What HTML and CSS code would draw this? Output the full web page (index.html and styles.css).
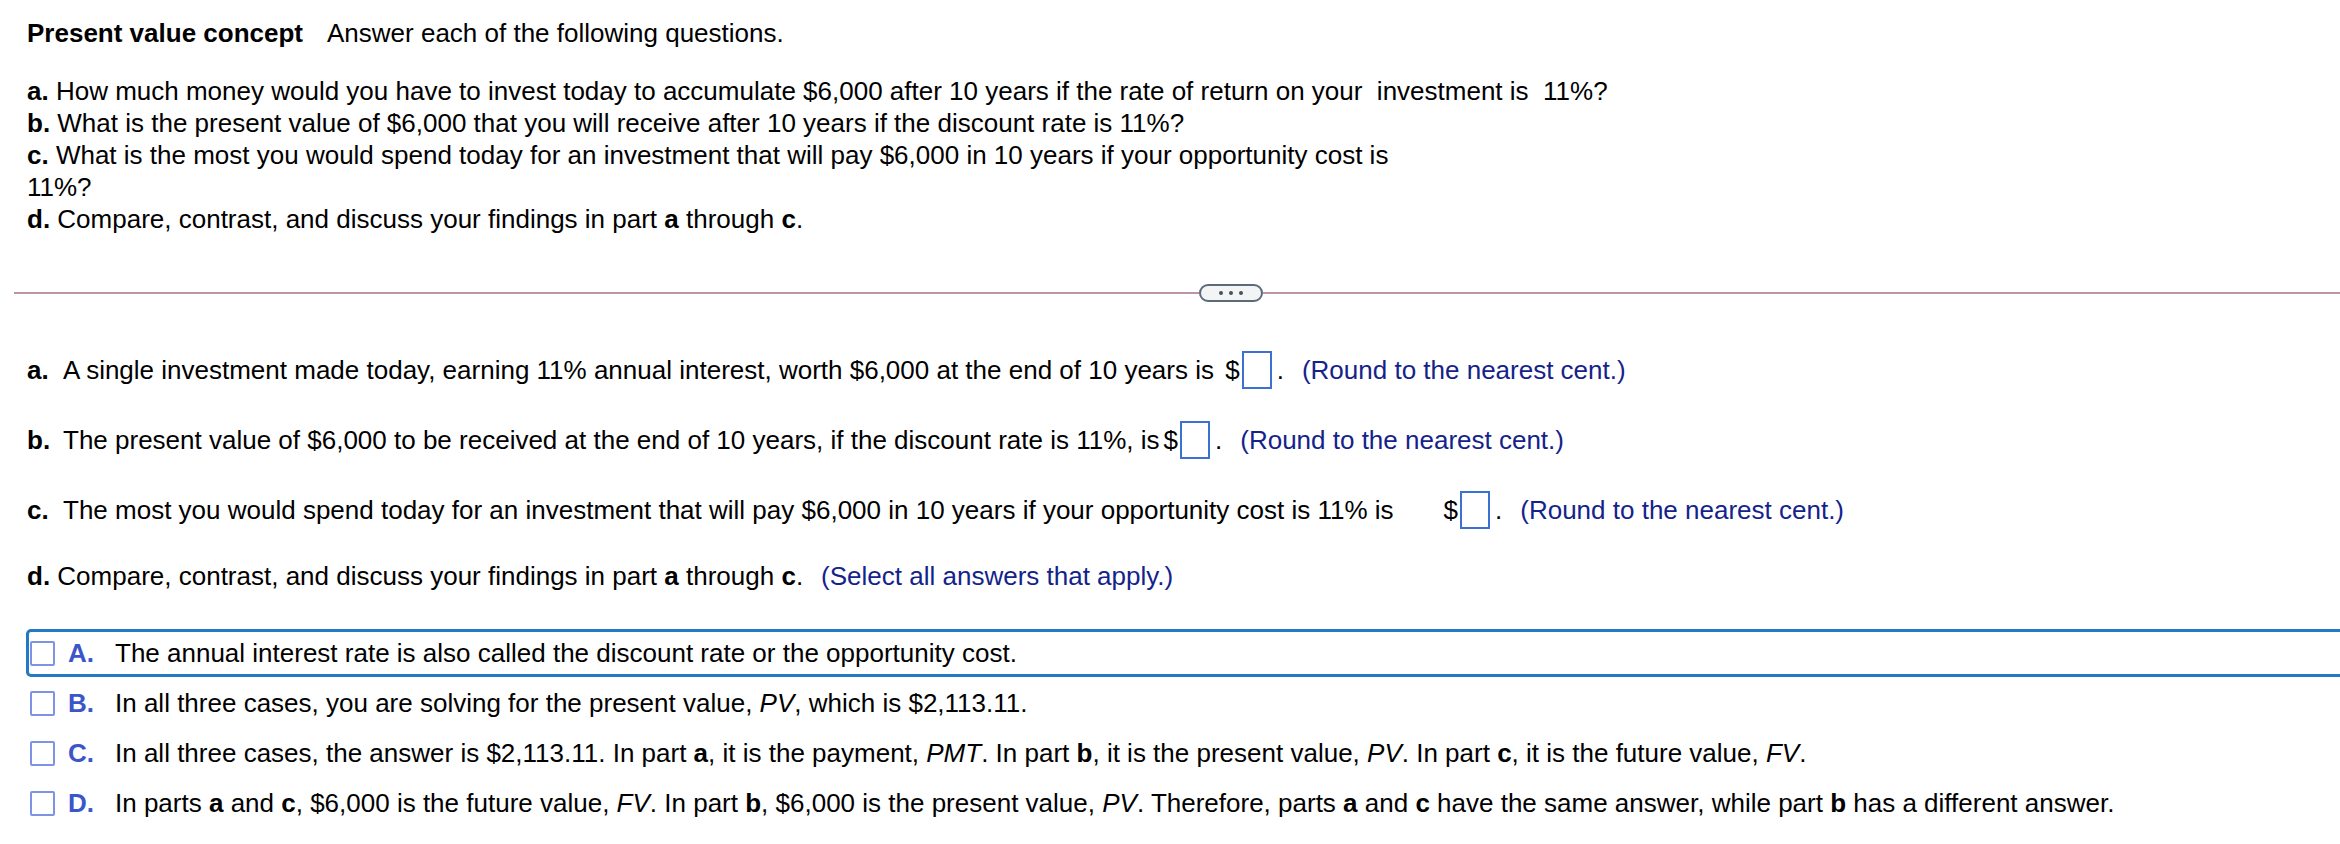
FILE: index.html
```html
<!DOCTYPE html>
<html lang="en">
<head>
    <meta charset="UTF-8">
    <title>Present value concept</title>
    <link rel="stylesheet" href="styles.css">
</head>
<body>
    <div class="page">
        <div class="intro">
            <p class="title"><b>Present value concept</b><span class="lead">Answer each of the following questions.</span></p>
            <p class="questions">
                <b>a.</b> How much money would you have to invest today to accumulate $6,000 after 10 years if the rate of return on your&nbsp; investment is&nbsp; 11%?<br>
                <b>b.</b> What is the present value of $6,000 that you will receive after 10 years if the discount rate is 11%?<br>
                <b>c.</b> What is the most you would spend today for an investment that will pay $6,000 in 10 years if your opportunity cost is<br>
                11%?<br>
                <b>d.</b> Compare, contrast, and discuss your findings in part <b>a</b> through <b>c</b>.
            </p>
        </div>

        <div class="divider">
            <span class="rule rule-left"></span>
            <button class="more"><i></i><i></i><i></i></button>
            <span class="rule"></span>
        </div>

        <div class="answers">
            <div class="ans">
                <b class="tag">a.</b>
                <span>A single investment made today, earning 11% annual interest, worth $6,000 at the end of 10 years is&nbsp;</span>
                <span class="cur">$</span><span class="box"></span><span class="dot">.</span>
                <span class="hint">(Round to the nearest cent.)</span>
            </div>
            <div class="ans">
                <b class="tag">b.</b>
                <span>The present value of $6,000 to be received at the end of 10 years, if the discount rate is 11%, is</span>
                <span class="cur">$</span><span class="box"></span><span class="dot">.</span>
                <span class="hint">(Round to the nearest cent.)</span>
            </div>
            <div class="ans">
                <b class="tag">c.</b>
                <span>The most you would spend today for an investment that will pay $6,000 in 10 years if your opportunity cost is 11% is</span>
                <span class="cur cur-wide">$</span><span class="box"></span><span class="dot">.</span>
                <span class="hint">(Round to the nearest cent.)</span>
            </div>
            <p class="ans-d">
                <b>d.</b> Compare, contrast, and discuss your findings in part <b>a</b> through <b>c</b>.<span class="hint">(Select all answers that apply.)</span>
            </p>
        </div>

        <ul class="choices">
            <li class="choice selected">
                <span class="check"></span><b class="letter">A.</b>
                <span>The annual interest rate is also called the discount rate or the opportunity cost.</span>
            </li>
            <li class="choice">
                <span class="check"></span><b class="letter">B.</b>
                <span>In all three cases, you are solving for the present value, <i>PV</i>, which is $2,113.11.</span>
            </li>
            <li class="choice">
                <span class="check"></span><b class="letter">C.</b>
                <span>In all three cases, the answer is $2,113.11. In part <b>a</b>, it is the payment, <i>PMT</i>. In part <b>b</b>, it is the present value, <i>PV</i>. In part <b>c</b>, it is the future value, <i>FV</i>.</span>
            </li>
            <li class="choice">
                <span class="check"></span><b class="letter">D.</b>
                <span>In parts <b>a</b> and <b>c</b>, $6,000 is the future value, <i>FV</i>. In part <b>b</b>, $6,000 is the present value, <i>PV</i>. Therefore, parts <b>a</b> and <b>c</b> have the same answer, while part <b>b</b> has a different answer.</span>
            </li>
        </ul>
    </div>
</body>
</html>
```

FILE: styles.css
```css
html, body {
    margin: 0;
    background: #fff;
    overflow: hidden;
}

body {
    font-family: "Liberation Sans", Arial, Helvetica, sans-serif;
    font-size: 26px;
    line-height: 32px;
    color: #000;
}

p {
    margin: 0;
}

.page {
    width: 2400px;
    padding-top: 17px;
}

.intro {
    padding-left: 27px;
}

.title .lead {
    margin-left: 24px;
}

.questions {
    margin-top: 26px;
}

/* divider with the ellipsis button */
.divider {
    display: flex;
    align-items: center;
    margin-top: 49px;
    padding-left: 14px;
}

.rule {
    flex: 1;
    height: 2px;
    background: #bc95a7;
}

.rule-left {
    flex: 0 0 1185px;
}

.more {
    display: flex;
    justify-content: center;
    align-items: center;
    gap: 6px;
    width: 64px;
    height: 18px;
    padding: 0;
    border: 2px solid #5b6a7a;
    border-radius: 9px;
    background: #f3f4f6;
}

.more i {
    width: 4px;
    height: 4px;
    border-radius: 50%;
    background: #4b5058;
}

/* answer lines */
.answers {
    padding-left: 27px;
    margin-top: 48px;
}

.ans {
    display: flex;
    align-items: center;
    height: 40px;
    margin-bottom: 30px;
    white-space: nowrap;
}

.ans-d {
    height: 32px;
    white-space: nowrap;
}

.tag {
    width: 36px;
}

.cur {
    margin-left: 4px;
}

.cur-wide {
    margin-left: 50px;
}

.box {
    display: inline-block;
    width: 26px;
    height: 34px;
    margin-left: 2px;
    border: 2px solid #3d71d1;
}

.dot {
    margin-left: 5px;
}

.hint {
    margin-left: 18px;
    color: #14238a;
}

/* multiple choice list */
.choices {
    list-style: none;
    margin: 37px 0 0;
    padding: 0 0 0 26px;
}

.choice {
    display: flex;
    align-items: center;
    height: 42px;
    margin-bottom: 2px;
    padding-left: 1px;
    border: 3px solid transparent;
    border-radius: 5px;
}

.choice.selected {
    border-color: #2379c6;
}

.check {
    width: 21px;
    height: 21px;
    border: 2px solid #7e93e3;
    border-radius: 2px;
}

.letter {
    width: 47px;
    margin-left: 13px;
    color: #3b56c9;
}
```
